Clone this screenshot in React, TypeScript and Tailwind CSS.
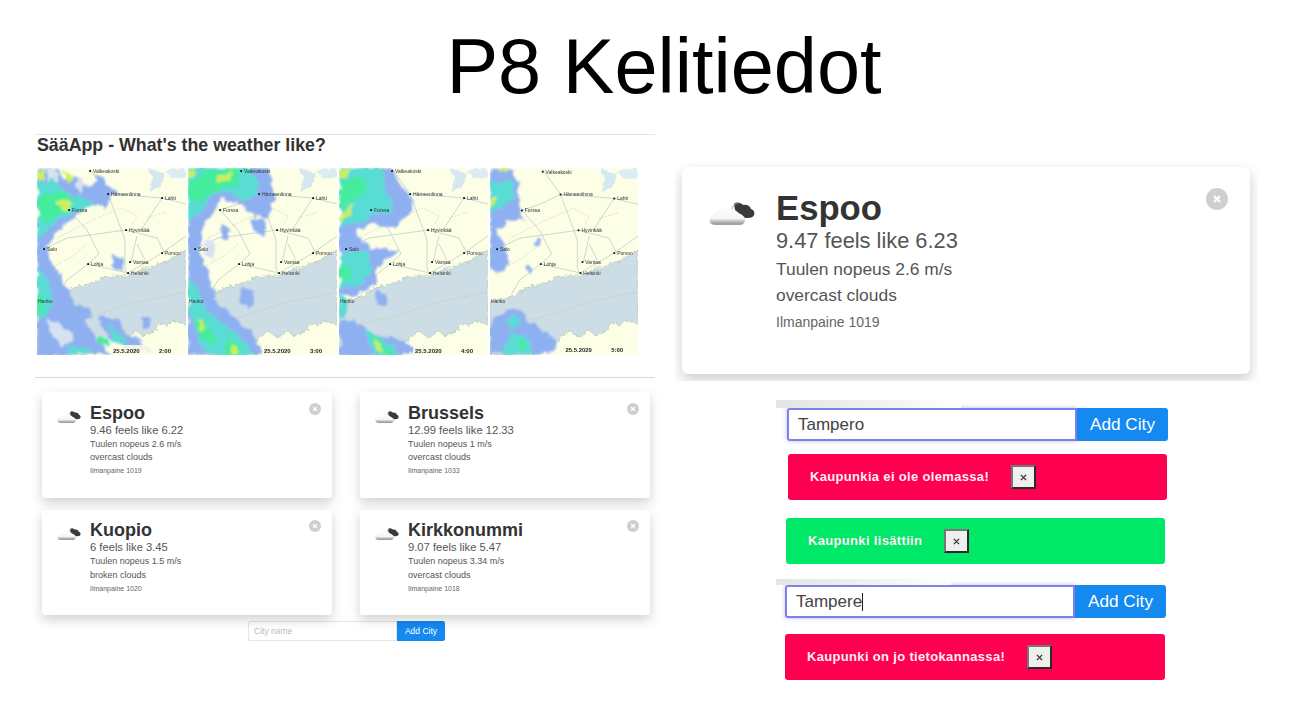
import React from "react";

const FONT = "font-['Liberation_Sans',Arial,sans-serif]";

const CITIES = [
  { name: "Espoo", temp: "9.46 feels like 6.22", wind: "Tuulen nopeus 2.6 m/s", desc: "overcast clouds", pressure: "Ilmanpaine 1019" },
  { name: "Brussels", temp: "12.99 feels like 12.33", wind: "Tuulen nopeus 1 m/s", desc: "overcast clouds", pressure: "Ilmanpaine 1033" },
  { name: "Kuopio", temp: "6 feels like 3.45", wind: "Tuulen nopeus 1.5 m/s", desc: "broken clouds", pressure: "Ilmanpaine 1020" },
  { name: "Kirkkonummi", temp: "9.07 feels like 5.47", wind: "Tuulen nopeus 3.34 m/s", desc: "overcast clouds", pressure: "Ilmanpaine 1018" },
];

const TOWNS = [
  { name: "Valkeakoski", x: 53, y: 3 },
  { name: "Hämeenlinna", x: 71, y: 26 },
  { name: "Lahti", x: 125, y: 30 },
  { name: "Forssa", x: 32, y: 42 },
  { name: "Hyvinkää", x: 89, y: 62 },
  { name: "Salo", x: 7, y: 81 },
  { name: "Porvoo", x: 125, y: 85 },
  { name: "Vantaa", x: 93, y: 94 },
  { name: "Lohja", x: 51, y: 96 },
  { name: "Helsinki", x: 91, y: 105 },
];

// rain layers per frame, light to heavy
const FRAMES = [
  {
    time: "2:00",
    blue: [
      "M0 0L20 0L28 12L38 6L50 18L60 8L68 12L78 24L68 40L60 36L46 40L34 52L18 64L10 80L18 100L28 115L34 130L48 150L60 172L76 187L0 187Z",
      "M62 150L78 150L90 165L106 172L114 184L88 180L72 172Z",
      "M40 138L52 140L54 150L42 152Z",
      "M76 88L86 90L86 102L76 100Z",
      "M104 148L114 150L112 162L104 160Z",
    ],
    gap: ["M10 150L24 155L36 172L26 178L14 165Z", "M8 0L18 0L24 14L14 20Z", "M40 8L50 18L44 26L38 18Z"],
    teal: [
      "M0 14L18 12L30 24L50 32L60 38L44 40L28 50L12 60L0 72Z",
      "M0 100L10 110L16 130L8 150L0 150Z",
      "M70 158L84 165L92 178L78 176Z",
      "M30 178L55 182L50 187L30 187Z",
    ],
    green: ["M4 26L26 22L40 32L24 46L8 54L0 46Z", "M0 124L8 130L6 145L0 145Z", "M60 170L72 172L70 178L60 176Z"],
    yellow: ["M20 36L30 32L38 36L28 44Z", "M0 2L6 2L8 10L0 12Z", "M28 4L34 4L36 12L30 14Z"],
  },
  {
    time: "3:00",
    blue: [
      "M0 0L82 0L86 30L82 50L66 48L50 34L34 30L22 50L12 62L12 85L22 110L27 130L38 142L62 165L78 187L0 187Z",
      "M62 50L76 52L78 68L66 64Z",
      "M54 120L66 124L62 140L50 136Z",
      "M34 58L42 60L40 72L32 70Z",
    ],
    gap: ["M18 72L28 74L24 90L16 86Z"],
    teal: [
      "M0 0L64 0L72 24L60 34L44 26L26 24L12 44L0 52Z",
      "M0 110L12 122L18 142L34 154L56 172L66 187L20 187L6 160L0 140Z",
    ],
    green: ["M18 4L50 0L50 18L30 22L10 34L0 30L0 16Z", "M6 150L20 158L28 172L22 178L8 160Z", "M40 174L54 178L50 187L36 187Z"],
    yellow: ["M28 8L44 4L42 12L30 16Z", "M10 152L18 160L14 164Z", "M44 176L52 182L42 186Z", "M0 2L8 0L6 8L0 10Z"],
  },
  {
    time: "4:00",
    blue: [
      "M0 0L56 0L60 16L70 26L74 40L56 60L36 56L18 60L22 76L44 82L60 84L48 92L38 100L34 118L18 125L0 128Z",
      "M0 150L16 152L28 165L52 170L76 180L80 187L0 187Z",
      "M36 120L48 126L48 138L38 134Z",
    ],
    gap: [],
    teal: ["M0 0L40 0L50 26L52 44L32 48L12 56L0 60Z", "M0 84L30 84L34 100L24 116L0 120Z", "M24 160L44 170L60 184L36 187Z", "M0 128L8 132L6 148L0 148Z"],
    green: ["M0 14L28 8L26 24L8 36L0 40Z", "M0 100L12 98L14 110L0 116Z", "M30 166L40 172L54 187L42 187Z"],
    yellow: ["M0 44L16 36L10 48L0 54Z", "M0 2L12 0L10 8L0 10Z", "M34 170L40 176L44 184L38 182Z"],
  },
  {
    time: "5:00",
    blue: [
      "M0 0L26 0L30 36L34 50L14 54L8 64L18 86L16 102L6 106L0 100Z",
      "M10 146L32 142L36 150L56 166L68 176L60 187L0 187L0 156Z",
      "M36 96L42 98L40 106L36 104Z",
      "M48 70L52 72L50 78L46 76Z",
    ],
    gap: [],
    teal: ["M0 14L22 10L24 30L8 42L0 48Z", "M14 152L26 148L32 156L20 160Z", "M22 164L36 170L46 187L12 187Z"],
    green: ["M28 172L36 176L34 184L28 180Z"],
    yellow: ["M0 32L8 28L6 36L0 40Z", "M8 0L18 0L14 4L8 4Z"],
  },
];

function RadarMap({ frame, id, seed }: { frame: (typeof FRAMES)[number]; id: string; seed: number }) {
  return (
    <svg viewBox="0 0 149 187" className="w-[149px] last:w-[148px] h-[187px] shrink-0 bg-[#fdfee6]">
      <defs>
        <filter id={id} x="-10%" y="-10%" width="120%" height="120%">
          <feTurbulence type="fractalNoise" baseFrequency="0.1" numOctaves="3" seed={seed} result="noise" />
          <feDisplacementMap in="SourceGraphic" in2="noise" scale="10" xChannelSelector="R" yChannelSelector="G" />
          <feGaussianBlur stdDeviation="0.9" />
        </filter>
        <filter id={`${id}c`} x="-5%" y="-5%" width="110%" height="110%">
          <feTurbulence type="fractalNoise" baseFrequency="0.25" numOctaves="2" seed="4" result="noise" />
          <feDisplacementMap in="SourceGraphic" in2="noise" scale="6" xChannelSelector="R" yChannelSelector="G" />
          <feGaussianBlur stdDeviation="0.3" />
        </filter>
        <filter id={`${id}t`}>
          <feGaussianBlur stdDeviation="0.22" />
        </filter>
      </defs>
      {/* lakes */}
      <g filter={`url(#${id}c)`}>
        <path d="M110 0L128 6L124 18L112 24L116 10Z" fill="#d5e8f0" />
        <path d="M128 2L149 0L149 10L134 10Z" fill="#dcecf4" />
        {/* sea and coast */}
        <path
          d="M0 133L12 131L25 128L36 120L46 118L60 113L66 110L76 108L90 108L100 104L106 100L114 100L120 96L130 94L136 90L142 86L149 82L149 157L136 152L130 158L123 155L117 163L108 168L100 163L90 170L80 163L72 170L63 178L50 187L0 187Z"
          fill="#cddde5"
          stroke="#a8bfa8"
          strokeWidth="0.6"
        />
      </g>
      {/* roads */}
      <g fill="none" stroke="#b4c8c8" strokeWidth="0.7" filter={`url(#${id}t)`}>
        <path d="M71 26L80 50L88 72L88 100L90 106" />
        <path d="M71 26L100 28L125 30L149 36" />
        <path d="M32 42L50 36L71 26L53 1" />
        <path d="M32 42L50 62L62 86L51 96L30 112L22 126" />
        <path d="M89 62L120 70L128 86" />
        <path d="M100 68L94 94M100 76L108 92" />
        <path d="M7 81L30 70L60 66L89 62M125 30L104 62" />
        <path d="M51 96L91 105L125 85L149 68" />
      </g>
      <g fill="none" stroke="#b0b89a" strokeWidth="0.5" strokeDasharray="1.5 1.5">
        <path d="M20 70L40 60L60 50L84 40L100 48L96 56" />
        <path d="M14 100L36 88L50 76M110 50L130 44" />
        <path d="M0 160L50 150L100 134L149 124" />
      </g>
      {/* rain */}
      <g filter={`url(#${id})`}>
        {frame.blue.map((d) => <path key={d} d={d} fill="#8fb0f0" />)}
        {frame.gap.map((d) => <path key={d} d={d} fill="#d6e2f0" />)}
        {frame.teal.map((d) => <path key={d} d={d} fill="#58dcd4" />)}
        {frame.green.map((d) => <path key={d} d={d} fill="#45ec9c" />)}
        {frame.yellow.map((d) => <path key={d} d={d} fill="#c9f05c" />)}
      </g>
      <g filter={`url(#${id}t)`} fontFamily="Liberation Sans, sans-serif">
        {TOWNS.map((t) => (
          <g key={t.name}>
            <rect x={t.x - 0.8} y={t.y - 0.8} width="1.8" height="1.8" fill="#111" />
            <text x={t.x + 3} y={t.y + 2} fontSize="5" fill="#333">
              {t.name}
            </text>
          </g>
        ))}
        <text x="1" y="135" fontSize="5" fill="#333">Hanko</text>
        <rect x="74" y="177" width="75" height="10" fill="#fdfee6" opacity="0.85" />
        <text x="76" y="184.5" fontSize="6" fontWeight="700" fill="#222">25.5.2020</text>
        <text x="122" y="184.5" fontSize="6" fontWeight="700" fill="#222">{frame.time}</text>
      </g>
    </svg>
  );
}

function CloudIcon({ className }: { className: string }) {
  return (
    <svg viewBox="0 0 46 27" className={className}>
      <defs>
        <linearGradient id="cloudWhite" x1="0" y1="0" x2="0" y2="1">
          <stop offset="0" stopColor="#ffffff" />
          <stop offset="0.62" stopColor="#f4f4f4" />
          <stop offset="0.8" stopColor="#bdbdbd" />
          <stop offset="1" stopColor="#8a8a8a" />
        </linearGradient>
      </defs>
      <path
        d="M25 4C28 1 32 3 34 5C38 4 41 6 42 9C45 10 46 13 45 15C44 18 40 18 36 18L26 10Z"
        fill="#3a3a3a"
      />
      <path d="M23 9C24 5 27 3 30 3" fill="none" stroke="#9a9a9a" strokeWidth="1" />
      <path
        d="M6 25C2 25 0 22 1 19C2 16 5 15 7 15C8 10 13 7 18 8C22 9 25 11 26 14C29 13 33 14 35 17C37 20 36 25 31 25Z"
        fill="url(#cloudWhite)"
        stroke="#e8e8e8"
        strokeWidth="0.4"
      />
    </svg>
  );
}

function CloseDot({ large, tall }: { large?: boolean; tall?: boolean }) {
  return (
    <div
      className={
        large
          ? "absolute top-[21px] right-[22px] w-[22px] h-[22px] rounded-full bg-[#cfcfcf] flex items-center justify-center"
          : `absolute ${tall ? "top-[11px]" : "top-[10px]"} right-[11px] w-[12px] h-[12px] rounded-full bg-[#cfcfcf] flex items-center justify-center`
      }
    >
      <svg viewBox="0 0 10 10" className={large ? "w-[10px] h-[10px]" : "w-[6px] h-[6px]"}>
        <path d="M2 2L8 8M8 2L2 8" stroke="#fff" strokeWidth="2.2" />
      </svg>
    </div>
  );
}

function CityCard({ city, tall }: { city: (typeof CITIES)[number]; tall: boolean }) {
  return (
    <div
      className={`relative bg-white rounded-[3px] shadow-[0_5px_12px_rgba(0,0,0,0.18)] flex pl-[15px] ${
        tall ? "h-[106px] pt-[12px]" : "h-[105px] pt-[11px]"
      }`}
    >
      <CloudIcon className="w-[24px] h-[14px] mt-[6px] shrink-0" />
      <div className="ml-[9px]">
        <div className="text-[18px] leading-[18px] font-bold text-[#333]">{city.name}</div>
        <div className="text-[11.2px] leading-[14px] mt-[1px] text-[#555]">{city.temp}</div>
        <div className="text-[9px] leading-[14px] text-[#555]">{city.wind}</div>
        <div className={`text-[9px] text-[#555] ${tall ? "leading-[13px]" : "leading-[14px]"}`}>{city.desc}</div>
        <div className="text-[7px] leading-[14px] text-[#666]">{city.pressure}</div>
      </div>
      <CloseDot tall={tall} />
    </div>
  );
}

function CityForm({ value, caret }: { value: string; caret?: boolean }) {
  return (
    <div className="flex h-[33px] w-[381px]">
      <div className="w-[290px] h-full bg-white border-2 border-[#8080ea] rounded-l-[3px] shadow-[0_0_4px_rgba(110,110,230,0.5)] pl-[9px] text-[17px] leading-[29px] text-[#444] flex items-center">
        {value}
        {caret && <span className="w-px h-[18px] bg-[#222]" />}
      </div>
      <div className="flex-1 h-full bg-[#1489f0] rounded-r-[3px] text-white text-[17.2px] flex items-center justify-center">
        Add City
      </div>
    </div>
  );
}

function Alert({ text, color, width }: { text: string; color: string; width: string }) {
  return (
    <div className={`${color} ${width} h-[46px] rounded-[3px] flex items-center pl-[22px]`}>
      <span className="text-[13px] font-bold text-[#ffeef4] tracking-[0.33px]">{text}</span>
      <span className="ml-[22px] w-[25px] h-[24px] bg-[#efefef] border-2 border-t-[#767676] border-l-[#767676] border-r-[#2b2b2b] border-b-[#2b2b2b] flex items-center justify-center">
        <svg viewBox="0 0 8 8" className="w-[7px] h-[7px]">
          <path d="M1 1L7 7M7 1L1 7" stroke="#333" strokeWidth="1.5" />
        </svg>
      </span>
    </div>
  );
}

export default function App() {
  return (
    <div className={`${FONT} w-[1295px] h-[721px] bg-white overflow-hidden`}>
      <div className="h-[134px] flex items-center justify-center pl-[33px]">
        <h1 className="text-[77.5px] leading-none text-black">P8 Kelitiedot</h1>
      </div>

      <div className="flex pl-[35px] gap-[20px]">
        {/* left slide half */}
        <div className="w-[620px]">
          <div className="border-t border-[#e5e5e5] pl-[2px]">
            <h2 className="text-[17.8px] leading-[20px] font-bold text-[#333]">SääApp - What's the weather like?</h2>
            <div className="flex gap-[2px] mt-[13px]">
              {FRAMES.map((f, i) => (
                <RadarMap key={f.time} frame={f} id={`rain${i}`} seed={i * 5 + 2} />
              ))}
            </div>
          </div>
          <div className="border-t border-[#d8d8d8] mt-[22px]" />
          <div className="grid grid-cols-[290px_290px] gap-x-[28px] gap-y-[12px] mt-[14px] ml-[7px]">
            {CITIES.map((c, i) => (
              <CityCard key={c.name} city={c} tall={i < 2} />
            ))}
          </div>
          <div className="flex mt-[6px] ml-[213px] h-[20px]">
            <input
              readOnly
              placeholder="City name"
              className="w-[149px] h-full border border-[#e6e6e6] rounded-l-[2px] pl-[5px] text-[8.5px] outline-none placeholder:text-[#bbb]"
            />
            <div className="w-[48px] h-full bg-[#1489f0] rounded-r-[2px] text-white text-[8.5px] flex items-center justify-center">
              Add City
            </div>
          </div>
        </div>

        {/* right slide half */}
        <div className="w-[583px]">
          <div className="mt-[26px] h-[221px] overflow-hidden px-[7px] pt-[7px]">
            <div className="relative bg-white rounded-[6px] shadow-[0_6px_14px_rgba(0,0,0,0.2)] h-[207px] w-[568px] flex pl-[27px] pt-[23px]">
              <CloudIcon className="w-[46px] h-[27px] mt-[10px] shrink-0" />
              <div className="ml-[21px]">
                <div className="text-[34.7px] leading-[36px] font-bold text-[#333]">Espoo</div>
                <div className="text-[21.8px] leading-[26px] mt-[2px] text-[#555]">9.47 feels like 6.23</div>
                <div className="text-[17.4px] leading-[26px] mt-[2px] text-[#555]">Tuulen nopeus 2.6 m/s</div>
                <div className="text-[17.4px] leading-[26px] text-[#555]">overcast clouds</div>
                <div className="text-[14px] leading-[20px] mt-[4px] text-[#666]">Ilmanpaine 1019</div>
              </div>
              <CloseDot large />
            </div>
          </div>

          <div className="relative mt-[27px] ml-[112px]">
            <div className="absolute -top-[8px] -left-[11px] w-[185px] h-[8px] bg-gradient-to-r from-[#e4e4e4] via-[#f0f0f0] to-white" />
            <CityForm value="Tampero" />
          </div>
          <div className="mt-[13px] ml-[113px]">
            <Alert text="Kaupunkia ei ole olemassa!" color="bg-[#ff0050]" width="w-[379px]" />
          </div>
          <div className="mt-[18px] ml-[111px]">
            <Alert text="Kaupunki lisättiin" color="bg-[#00e868]" width="w-[379px]" />
          </div>
          <div className="relative mt-[21px] ml-[110px]">
            <div className="absolute -top-[6px] -left-[9px] w-[175px] h-[6px] bg-gradient-to-r from-[#e4e4e4] via-[#f0f0f0] to-white" />
            <CityForm value="Tampere" caret />
          </div>
          <div className="mt-[16px] ml-[110px]">
            <Alert text="Kaupunki on jo tietokannassa!" color="bg-[#ff0050]" width="w-[380px]" />
          </div>
        </div>
      </div>
    </div>
  );
}
